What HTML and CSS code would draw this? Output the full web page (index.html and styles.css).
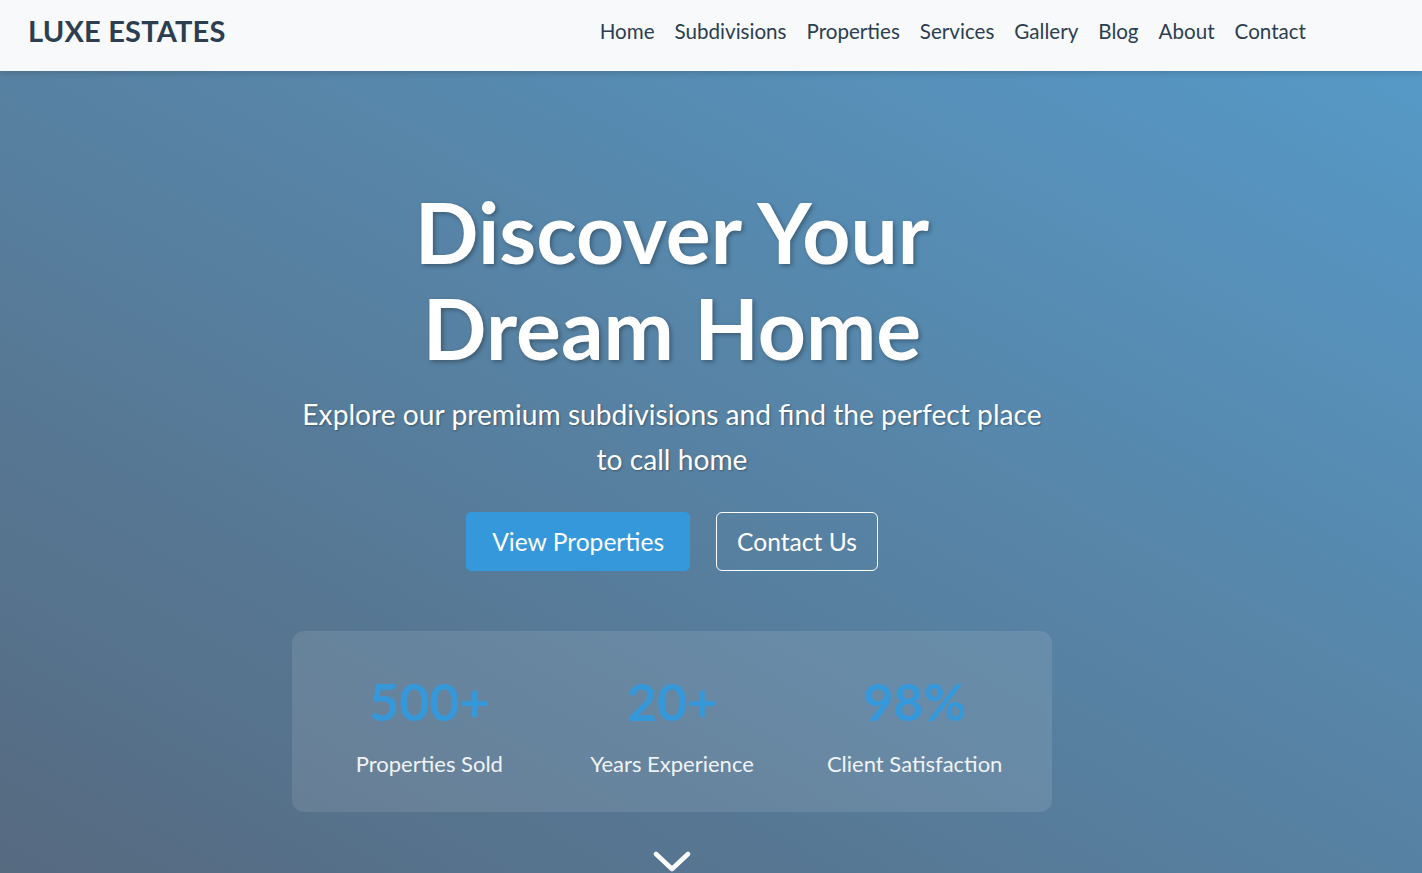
FILE: index.html
```html
<!DOCTYPE html>
<html lang="en">
<head>
<meta charset="utf-8">
<title>Luxe Estates</title>
<link rel="stylesheet" href="styles.css">
</head>
<body>
<header class="navbar">
  <div class="logo">LUXE ESTATES</div>
  <nav>
    <ul class="nav-links">
      <li><a href="#">Home</a></li>
      <li><a href="#">Subdivisions</a></li>
      <li><a href="#">Properties</a></li>
      <li><a href="#">Services</a></li>
      <li><a href="#">Gallery</a></li>
      <li><a href="#">Blog</a></li>
      <li><a href="#">About</a></li>
      <li><a href="#">Contact</a></li>
    </ul>
  </nav>
</header>
<section class="hero">
  <div class="hero-content">
    <h1 class="hero-title">Discover Your<br>Dream Home</h1>
    <p class="hero-subtitle">Explore our premium subdivisions and find the perfect place to call home</p>
    <div class="hero-buttons">
      <a href="#" class="btn btn-primary">View Properties</a>
      <a href="#" class="btn btn-outline">Contact Us</a>
    </div>
    <div class="stats">
      <div class="stat">
        <div class="stat-number">500+</div>
        <div class="stat-label">Properties Sold</div>
      </div>
      <div class="stat">
        <div class="stat-number">20+</div>
        <div class="stat-label">Years Experience</div>
      </div>
      <div class="stat">
        <div class="stat-number">98%</div>
        <div class="stat-label">Client Satisfaction</div>
      </div>
    </div>
    <div class="scroll-down">
      <svg width="38" height="24" viewBox="0 0 38 24"><path d="M3 5 L19 20 L35 5" fill="none" stroke="#fff" stroke-width="4.5" stroke-linecap="round" stroke-linejoin="round"/></svg>
    </div>
  </div>
</section>
</body>
</html>
```
FILE: styles.css
```css
* { box-sizing: border-box; margin: 0; padding: 0; }
html, body { height: 100%; overflow: hidden; }
body {
  font-family: Lato, "Open Sans", sans-serif;
  color: #2c3e50;
  background: #f8f9fa;
}
.navbar {
  position: relative;
  z-index: 2;
  height: 71px;
  display: flex;
  align-items: center;
  justify-content: space-between;
  padding: 0 116px 10px 28px;
  background: #f8f9fa;
  box-shadow: 0 2px 6px rgba(0,0,0,0.15);
}
.logo {
  font-size: 29px;
  font-weight: 700;
  color: #2c3e50;
  letter-spacing: 0.2px;
}
.nav-links {
  list-style: none;
  display: flex;
  gap: 20px;
}
.nav-links a {
  text-decoration: none;
  color: #2c3e50;
  font-size: 20.6px;
}
.hero {
  height: calc(100vh - 71px);
  overflow: hidden;
  background: linear-gradient(to top right, #566a80 0%, #5781a2 50%, #5699c7 100%);
  color: #fff;
}
.hero-content {
  display: flex;
  flex-direction: column;
  align-items: center;
  text-align: center;
  padding: 113px 78px 0 0;
}
.hero-title {
  font-size: 84px;
  font-weight: 700;
  line-height: 96px;
  text-shadow: 2px 2px 4px rgba(0,0,0,0.3);
}
.hero-subtitle {
  max-width: 752px;
  margin-top: 16px;
  font-size: 28.2px;
  line-height: 45px;
  text-shadow: 1px 1px 2px rgba(0,0,0,0.3);
}
.hero-buttons {
  display: flex;
  gap: 26px;
  margin-top: 30px;
}
.btn {
  display: inline-block;
  height: 59px;
  line-height: 57px;
  padding: 0 25px;
  font-size: 24.6px;
  color: #fff;
  text-decoration: none;
  border-radius: 5px;
  border: 1px solid transparent;
}
.btn-primary { background: #3498db; border-color: #3498db; }
.btn-outline { border-color: #fff; border-radius: 6px; padding: 0 20px; }
.stats {
  width: 760px;
  margin-top: 60px;
  padding: 32px 32px 35px;
  display: grid;
  grid-template-columns: repeat(3, 1fr);
  gap: 32px;
  background: rgba(255,255,255,0.1);
  border-radius: 12px;
}
.stat-number {
  font-size: 52px;
  font-weight: 700;
  line-height: 80px;
  color: #3498db;
  margin-top: -2px;
}
.stat-label {
  margin-top: 10px;
  font-size: 22px;
  line-height: 26px;
  color: #f0f3f6;
}
.scroll-down {
  margin-top: 37px;
}
.scroll-down svg { display: block; }
```
